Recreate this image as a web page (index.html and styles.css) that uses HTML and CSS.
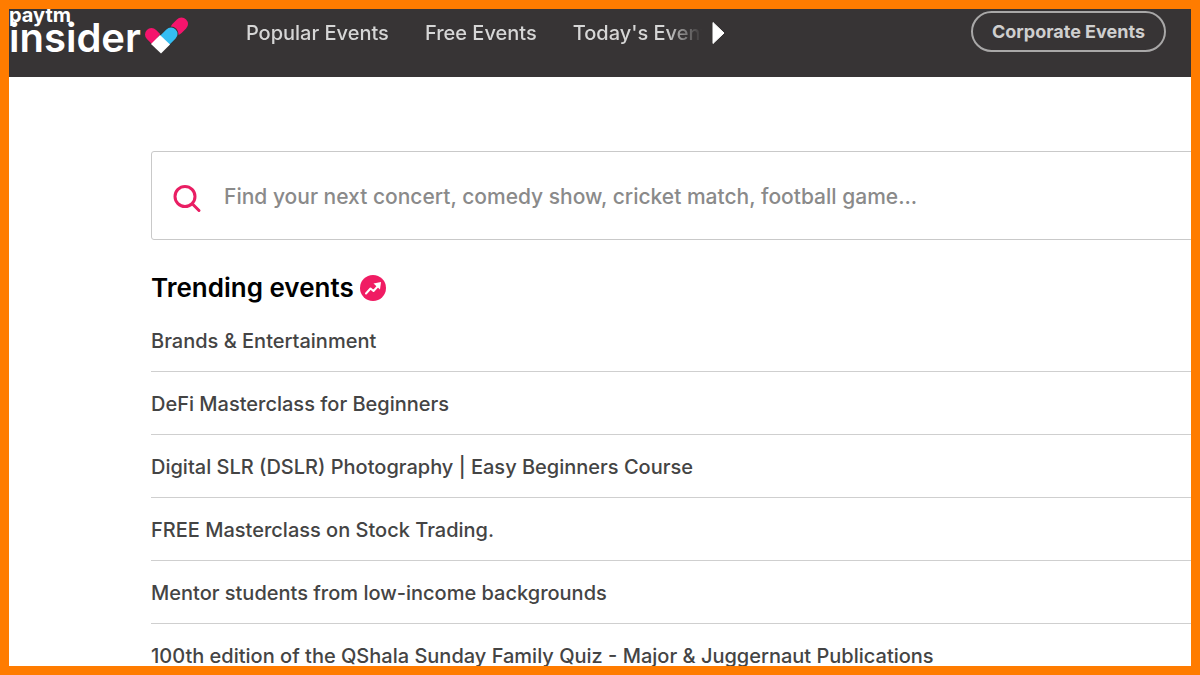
FILE: index.html
```html
<!DOCTYPE html>
<html lang="en">
<head>
  <meta charset="UTF-8" />
  <meta name="viewport" content="width=device-width, initial-scale=1.0"/>
  <title>Paytm Insider</title>
  <link rel="stylesheet" href="styles.css">
</head>
<body>

  <div class="page">
    <header class="header">
      <a href="#" class="logo">
        <span class="logo-text">
          <span class="logo-paytm">paytm</span>
          <span class="logo-insider">insider</span>
        </span>
        <!-- the mark: pink, white, blue and pink pills making a tick -->
        <svg class="logo-mark" width="46" height="38" viewBox="0 0 46 38" aria-hidden="true">
          <g fill="none" stroke-width="13" stroke-linecap="round">
            <path d="M8.500 17.500L16 25" stroke="#f5146c"/>
            <path d="M34 11.500L38.500 7" stroke="#f5146c"/>
            <path d="M21 24L28 17" stroke="#373435" stroke-width="15"/>
            <path d="M21 24L28 17" stroke="#35bdf2"/>
          </g>
          <path d="M8 27L17 18 27 27.500 18 36.500Z" fill="#fff"/>
        </svg>
      </a>

      <nav class="nav">
        <div class="nav-links">
          <a href="#">Popular Events</a>
          <a href="#">Free Events</a>
          <a href="#">Today's Events</a>
        </div>
        <button class="nav-next" type="button" aria-label="More">
          <svg width="14" height="22" viewBox="0 0 14 22" aria-hidden="true">
            <path d="M1 0.500L12 11 1 21.500Z" fill="#fff" stroke="#fff" stroke-linejoin="round"/>
          </svg>
        </button>
      </nav>

      <a href="#" class="corporate">Corporate Events</a>
    </header>

    <main class="content">
      <form class="search">
        <svg width="30" height="36" viewBox="0 0 30 36" aria-hidden="true">
          <g fill="none" stroke="#e91e63" stroke-width="3" stroke-linecap="round">
            <circle cx="13" cy="18.500" r="10"/>
            <path d="M20.500 26L27 32.500"/>
          </g>
        </svg>
        <input type="text" aria-label="Search events" placeholder="Find your next concert, comedy show, cricket match, football game...">
      </form>

      <h2 class="title">
        Trending events
        <svg width="26" height="26" viewBox="0 0 26 26" aria-hidden="true">
          <circle cx="13" cy="13" r="13" fill="#f01c63"/>
          <path d="M6 18.500L10.500 13.500 13.500 16 18 11" fill="none" stroke="#fff" stroke-width="2" stroke-linejoin="round" stroke-linecap="round"/>
          <path d="M13.500 8.500L21 7 20 14.500Z" fill="#fff"/>
        </svg>
      </h2>

      <ul class="events">
        <li><a href="#">Brands &amp; Entertainment</a></li>
        <li><a href="#">DeFi Masterclass for Beginners</a></li>
        <li><a href="#">Digital SLR (DSLR) Photography | Easy Beginners Course</a></li>
        <li><a href="#">FREE Masterclass on Stock Trading.</a></li>
        <li><a href="#">Mentor students from low-income backgrounds</a></li>
        <li><a href="#">100th edition of the QShala Sunday Family Quiz - Major &amp; Juggernaut Publications</a></li>
      </ul>
    </main>
  </div>

</body>
</html>
```
FILE: styles.css
```css
* {
  box-sizing: border-box;
}

body {
  margin: 0;
  font-family: Inter, "Liberation Sans", sans-serif;
  color: #444;
}

a {
  color: inherit;
  text-decoration: none;
}

.page {
  height: 100vh;
  overflow: hidden;
  border: 9px solid #ff7c00;
  background: #fff;
}

.header {
  display: flex;
  align-items: flex-start;
  height: 68px;
  padding-right: 25px;
  background: #373435;
  color: #d6d6d6;
}

.logo {
  display: flex;
  gap: 2px;
  color: #fff;
}

.logo-text {
  display: flex;
  flex-direction: column;
  font-weight: 600;
}

.logo-paytm {
  font-size: 20px;
  font-weight: 700;
  line-height: 12px;
}

.logo-insider {
  font-size: 40px;
  line-height: 34px;
}

.logo-mark {
  margin-top: 8px;
}

.nav {
  display: flex;
  align-items: center;
  gap: 10px;
  height: 48px;
  margin-left: 57px;
}

.nav-links {
  display: flex;
  gap: 36px;
  width: 456px;
  overflow: hidden;
  white-space: nowrap;
  font-size: 20px;
  font-weight: 500;
  line-height: 28px;
  -webkit-mask-image: linear-gradient(to right, #000 92%, transparent);
  mask-image: linear-gradient(to right, #000 92%, transparent);
}

.nav-next {
  display: flex;
  padding: 0;
  border: none;
  background: none;
  cursor: pointer;
}

.corporate {
  margin-top: 2px;
  margin-left: auto;
  padding: 0 19px;
  border: 2px solid #a9a8a8;
  border-radius: 21px;
  color: #cfcfcf;
  font-size: 18px;
  font-weight: 700;
  line-height: 37px;
}

.content {
  padding: 74px 0 0 142px;
}

.search {
  display: flex;
  align-items: center;
  gap: 22px;
  height: 89px;
  margin-right: -10px;
  padding-left: 20px;
  border: 1px solid #c9c9c9;
  border-radius: 3px;
}

.search input {
  flex: 1;
  padding: 2px 0 0;
  border: none;
  outline: none;
  font-family: inherit;
  font-size: 21px;
  font-weight: 500;
}

.search input::placeholder {
  color: #8a8a8a;
}

.title {
  display: flex;
  align-items: center;
  gap: 6px;
  margin: 32px 0 5px;
  font-size: 26px;
  font-weight: 600;
  line-height: 32px;
  color: #000;
}

.events {
  margin: 0;
  padding: 0;
  list-style: none;
  white-space: nowrap;
}

.events li {
  height: 63px;
  padding-top: 18px;
  border-bottom: 1px solid #cfcfcf;
  font-size: 20px;
  font-weight: 500;
  line-height: 28px;
}
```
